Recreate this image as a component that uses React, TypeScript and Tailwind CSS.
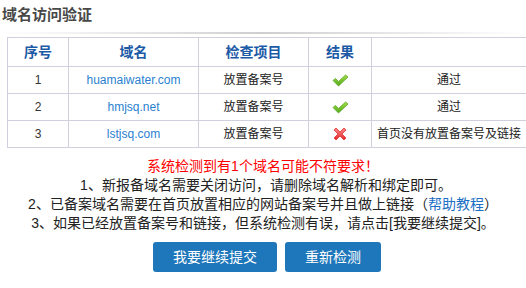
import { Fragment } from "react"

const rows = [
  { id: 1, domain: "huamaiwater.com", item: "放置备案号", ok: true, result: "通过" },
  { id: 2, domain: "hmjsq.net", item: "放置备案号", ok: true, result: "通过" },
  { id: 3, domain: "lstjsq.com", item: "放置备案号", ok: false, result: "首页没有放置备案号及链接" },
]

function CheckIcon() {
  return (
    <svg width="17" height="13" viewBox="0 0 17 13">
      <defs>
        <linearGradient id="gchk" x1="0" y1="0" x2="0" y2="1">
          <stop offset="0" stopColor="#a6e04a" />
          <stop offset="1" stopColor="#4fa819" />
        </linearGradient>
      </defs>
      <path d="M1 6.5 L3.5 4.5 L6.5 7.5 L13.5 1 L16 3 L6.5 12 Z" fill="url(#gchk)" stroke="#5aa624" strokeWidth="0.8" strokeLinejoin="round" />
    </svg>
  )
}

function CrossIcon() {
  return (
    <svg width="14" height="14" viewBox="0 0 14 14">
      <defs>
        <linearGradient id="gx" x1="0" y1="0" x2="0" y2="1">
          <stop offset="0" stopColor="#ff8a8a" />
          <stop offset="1" stopColor="#e42a2a" />
        </linearGradient>
      </defs>
      <path d="M1 3 L3 1 L7 5 L11 1 L13 3 L9 7 L13 11 L11 13 L7 9 L3 13 L1 11 L5 7 Z" fill="url(#gx)" stroke="#d93030" strokeWidth="0.8" strokeLinejoin="round" />
    </svg>
  )
}

export default function App() {
  return (
    <div
      className="w-[526px] h-[288px] overflow-hidden bg-white text-[#333]"
      style={{ fontFamily: '"Liberation Sans", Arial, "Noto Sans CJK SC", sans-serif' }}
    >
      {/* Title */}
      <h1 className="pl-[2px] pt-[5px] h-[32px] text-[15px] font-bold text-[#484848] leading-[20px]">域名访问验证</h1>
      <div className="h-[2px] bg-[linear-gradient(90deg,rgba(200,200,200,0)_0%,#cfcfcf_50%,rgba(200,200,200,0)_100%)]" />
      <div className="h-[3px]" />

      {/* Result table */}
      <table className="ml-[7px] w-[520px] border-collapse table-fixed text-[12px]">
        <colgroup>
          <col className="w-[61px]" />
          <col className="w-[130px]" />
          <col className="w-[110px]" />
          <col className="w-[63px]" />
          <col />
        </colgroup>
        <thead>
          <tr className="h-[29px]">
            {["序号", "域名", "检查项目", "结果", ""].map((h, i) => (
              <th key={i} className="border border-[#d0d0de] text-[14px] font-bold text-[#1c5aa6] text-center p-0">
                {h}
              </th>
            ))}
          </tr>
        </thead>
        <tbody>
          {rows.map((r) => (
            <Fragment key={r.id}>
              <tr className="h-[27px]">
                <td className="border border-[#d0d0de] text-center p-0">{r.id}</td>
                <td className="border border-[#d0d0de] text-center p-0 text-[#2a7fd0]">{r.domain}</td>
                <td className="border border-[#d0d0de] text-center p-0 text-[#222]">{r.item}</td>
                <td className="border border-[#d0d0de] p-0">
                  <div className="flex items-center justify-center">{r.ok ? <CheckIcon /> : <CrossIcon />}</div>
                </td>
                <td className="border border-[#d0d0de] text-center p-0 text-[#222] whitespace-nowrap">{r.result}</td>
              </tr>
            </Fragment>
          ))}
        </tbody>
      </table>

      {/* Notes */}
      <div className="mt-[9px] text-center text-[14px] leading-[19px] text-[#222]">
        <p className="text-[#ff0000]">系统检测到有1个域名可能不符要求！</p>
        <p className="pl-[6px]">1、新报备域名需要关闭访问，请删除域名解析和绑定即可。</p>
        <p>
          2、已备案域名需要在首页放置相应的网站备案号并且做上链接（<span className="text-[#1c6fc4]">帮助教程</span>）
        </p>
        <p>3、如果已经放置备案号和链接，但系统检测有误，请点击[我要继续提交]。</p>
      </div>

      {/* Actions */}
      <div className="mt-[9px] flex justify-center gap-[8px] pl-[8px]">
        <button className="w-[124px] h-[30px] rounded-[3px] bg-[#1f77bb] text-white text-[14px]">我要继续提交</button>
        <button className="w-[96px] h-[30px] rounded-[3px] bg-[#1f77bb] text-white text-[14px]">重新检测</button>
      </div>
    </div>
  )
}
